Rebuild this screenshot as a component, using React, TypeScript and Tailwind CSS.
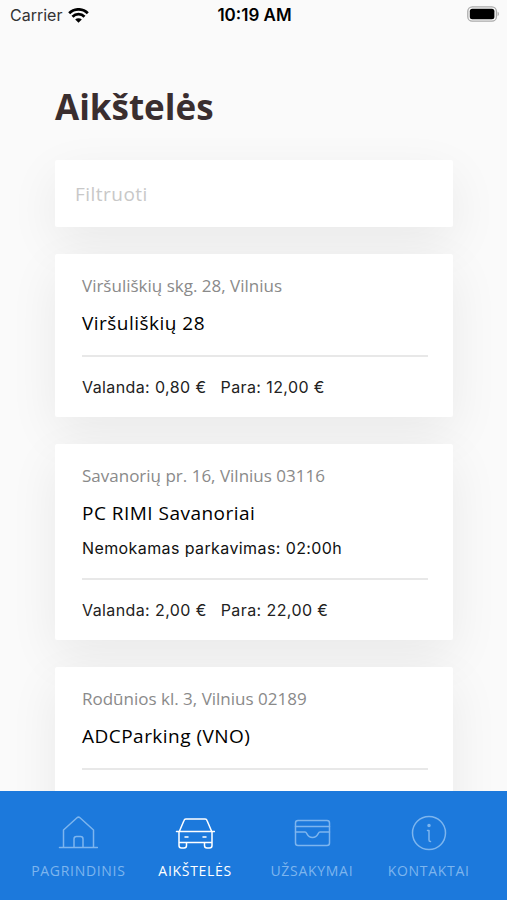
import type { ReactNode } from "react";

type Lot = {
  address: string;
  name: string;
  free?: string;
  hour?: string;
  day?: string;
};

const lots: Lot[] = [
  { address: "Viršuliškių skg. 28, Vilnius", name: "Viršuliškių 28", hour: "0,80 €", day: "12,00 €" },
  {
    address: "Savanorių pr. 16, Vilnius 03116",
    name: "PC RIMI Savanoriai",
    free: "02:00h",
    hour: "2,00 €",
    day: "22,00 €",
  },
  { address: "Rodūnios kl. 3, Vilnius 02189", name: "ADCParking (VNO)" },
];

function StatusBar() {
  return (
    <header className="grid h-[30px] shrink-0 grid-cols-3 items-center pr-2 pl-[10px] font-['Inter',sans-serif] text-base text-black">
      <div className="flex items-center gap-[6px] text-[#333]">
        <span>Carrier</span>
        <svg width="21" height="15" viewBox="0 0 21 15" fill="none" stroke="#000" strokeWidth="2.8" aria-hidden="true">
          <path d="M1.2 5.2a13.2 13.2 0 0 1 18.6 0" />
          <path d="M4.5 8.7a8.5 8.5 0 0 1 12 0" />
          <path d="M10.5 14.8 7.2 11.5a4.7 4.7 0 0 1 6.6 0Z" fill="#000" stroke="none" />
        </svg>
      </div>
      <span className="text-center text-[17px] leading-6 font-semibold whitespace-nowrap">10:19 AM</span>
      <svg className="mb-[2px] justify-self-end" width="32" height="16" viewBox="0 0 32 16" aria-hidden="true">
        <rect x="0.8" y="0.8" width="28.6" height="14.4" rx="4.5" fill="none" stroke="#aaa" strokeWidth="1.3" />
        <rect x="2.8" y="2.8" width="24.6" height="10.4" rx="2.500" fill="#000" />
        <path d="M30.6 5.800c1.700.6 1.700 3.800 0 4.400Z" fill="#aaa" />
      </svg>
    </header>
  );
}

function LotCard({ lot }: { lot: Lot }) {
  return (
    <li className="rounded-xs bg-white pt-5 pr-[25px] pb-[18px] pl-[27px] shadow-[0_16px_50px_rgba(0,0,0,0.07)]">
      <p className="text-[17px] leading-6 text-[#8a8a8a]">{lot.address}</p>
      <h2 className="mt-3 text-[19px] leading-[26px] font-medium tracking-wide text-black">{lot.name}</h2>
      {lot.free && (
        <p className="mt-3 font-['Inter',sans-serif] text-base leading-[21px] tracking-wide text-[#111]">
          Nemokamas parkavimas: {lot.free}
        </p>
      )}
      <div className="mt-[19px] border-t-2 border-[#e8e8e8] pt-[18px]">
        <div className="flex min-h-6 gap-[14px] font-['Inter',sans-serif] text-base leading-6 tracking-wide text-[#222]">
          {lot.hour && <span>Valanda: {lot.hour}</span>}
          {lot.day && <span>Para: {lot.day}</span>}
        </div>
      </div>
    </li>
  );
}

function NavItem({ label, active, children }: { label: string; active?: boolean; children: ReactNode }) {
  return (
    <a
      href="#"
      aria-current={active ? "page" : undefined}
      className={
        active
          ? "flex flex-col items-center gap-2 font-medium text-white"
          : "flex flex-col items-center gap-2 text-[#7db5ee]"
      }
    >
      <svg
        width="40"
        height="40"
        viewBox="0 0 40 40"
        fill="none"
        stroke="currentColor"
        strokeWidth="1.5"
        strokeLinecap="round"
        strokeLinejoin="round"
        aria-hidden="true"
      >
        {children}
      </svg>
      <span className="text-sm leading-5 tracking-wider">{label}</span>
    </a>
  );
}

export default function App() {
  return (
    <div className="flex h-screen flex-col overflow-hidden bg-[#fafafa] font-['Open_Sans',sans-serif]">
      <StatusBar />
      <main className="min-h-0 flex-1 overflow-y-auto pt-[52px] pr-[54px] pb-8 pl-[55px] [scrollbar-width:none]">
        <h1 className="text-[35px] leading-[50px] font-bold text-[#3a2e2f]">Aikštelės</h1>
        <input
          type="text"
          aria-label="Filtruoti"
          placeholder="Filtruoti"
          className="mt-7 block h-[67px] w-full rounded-xs bg-white px-5 text-[19px] tracking-wide text-black shadow-[0_16px_50px_rgba(0,0,0,0.07)] outline-none placeholder:text-[#c8c8c8]"
        />
        <ul className="mt-[27px] flex flex-col gap-[27px]">
          {lots.map((lot) => (
            <LotCard key={lot.name} lot={lot} />
          ))}
        </ul>
      </main>
      <nav className="grid h-[109px] shrink-0 grid-cols-4 bg-[#1c79dc] px-5 pt-[22px]">
        <NavItem label="PAGRINDINIS">
          <path d="M1.500 34.500h38M5.500 34.500V17L19 4.800q1.500-1.300 3 0L35.500 17v17.500M16 34.500V26a2.500 2.500 0 0 1 2.500-2.500h4a2.500 2.500 0 0 1 2.500 2.500v8.500" />
        </NavItem>
        <NavItem label="AIKŠTELĖS" active>
          <path d="M4.500 18 9 7.500a2 2 0 0 1 2-1.500h19a2 2 0 0 1 2 1.500l4.500 10.500M1.500 18.500h38M4 18.500V32.500a2.500 2.500 0 0 0 2.500 2.500h2.500a2.500 2.500 0 0 0 2.500-2.500v-3M37 18.500V32.500a2.500 2.500 0 0 1-2.500 2.500H32a2.500 2.500 0 0 1-2.500-2.500v-3M4 29.500h33M10 24h3M28 24h3" />
        </NavItem>
        <NavItem label="UŽSAKYMAI">
          <rect x="3.500" y="7.500" width="34" height="25" rx="2.500" />
          <path d="M3.500 13.500h34M3.500 19h9.500c2.500 0 1.500 5.500 7.500 5.500s5-5.500 7.500-5.500h9.500" />
        </NavItem>
        <NavItem label="KONTAKTAI">
          <circle cx="20" cy="20" r="16.500" />
          <path d="M18.500 17.500h1.500V27q0 1.500 1.500 1.500" />
          <circle cx="20" cy="12.500" r="1" fill="currentColor" />
        </NavItem>
      </nav>
    </div>
  );
}
